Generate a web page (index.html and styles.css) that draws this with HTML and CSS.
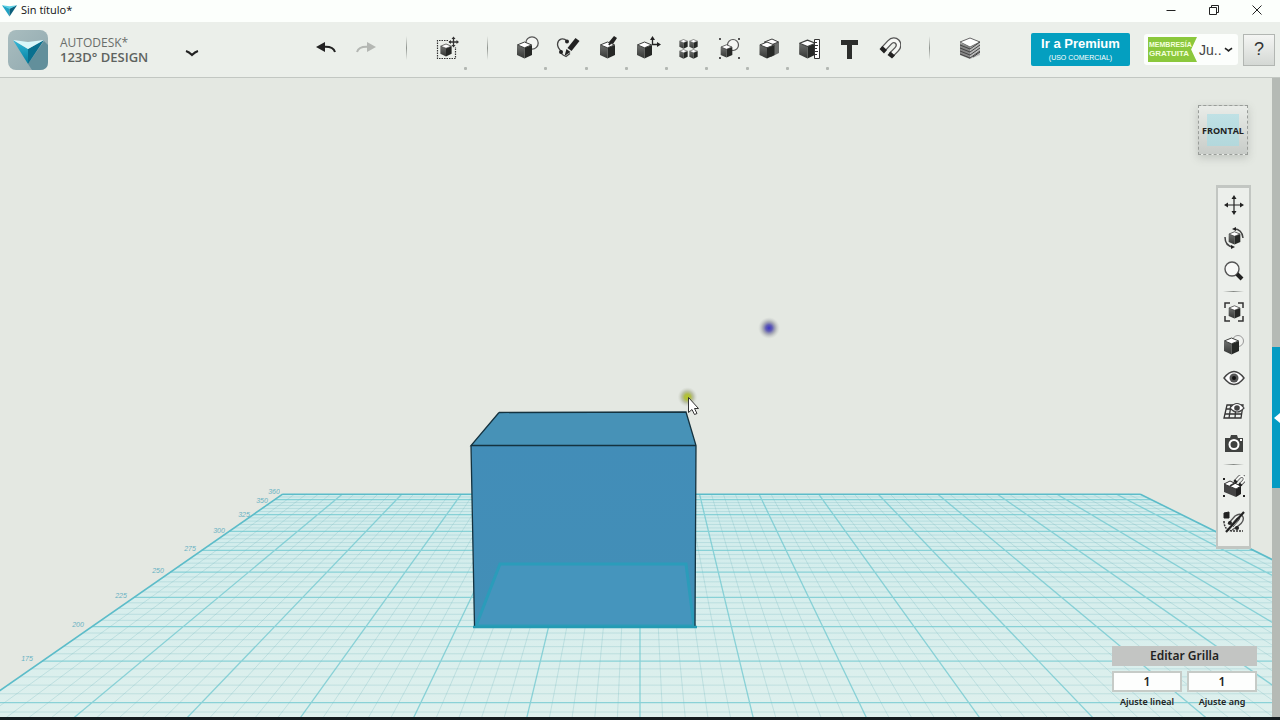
FILE: index.html
```html
<!DOCTYPE html>
<html lang="es">
<head>
<meta charset="utf-8">
<title>Sin título* - Autodesk 123D Design</title>
<link rel="stylesheet" href="styles.css">
</head>
<body>
<svg class="defs" aria-hidden="true">
  <defs>
    <linearGradient id="cube-side" x1="0" y1="0" x2="0" y2="1"><stop offset="0" stop-color="#6e706e"/><stop offset="1" stop-color="#343634"/></linearGradient>
    <symbol id="cube" viewBox="0 0 16 18">
      <path d="M.5 4L8 6.500v11L.5 14z" fill="url(#cube-side)"/>
      <path d="M8 6.500L15.500 4v10L8 17.500z" fill="#262826"/>
      <path d="M.9 3.900L8 1l7.100 2.900L8 6.800z" fill="#fff" stroke="#3c3e3c" stroke-width="1" stroke-linejoin="round"/>
    </symbol>
    <symbol id="magnet" viewBox="0 0 22 22">
      <path d="M4 12.500L10.500 5.500C16-.5 23 7 17.500 12.500L12 18" fill="none" stroke="#555" stroke-width="6"/>
      <path d="M4 12.500L10.500 5.500C16-.5 23 7 17.500 12.500L12 18" fill="none" stroke="#f6f8f5" stroke-width="3.400"/>
      <path d="M.5 12L3.500 9l4.500 4-3 3.500zM8.500 18l3-3.500 4.500 4-3 3z" fill="#222"/>
    </symbol>
  </defs>
</svg>
<div class="app">
  <header class="titlebar">
    <svg class="title-mark" viewBox="0 0 16 13"><path d="M0 1l8 3v9z" fill="#1fa3c4"/><path d="M16 1L8 4v9z" fill="#0b5f7a"/><path d="M0 1l8 1 8-1-8 4z" fill="#5bd0e4"/></svg>
    <span class="title-text">Sin título*</span>
    <div class="window-controls">
      <button aria-label="Minimizar"><svg viewBox="0 0 12 12"><path d="M1.500 6.500h9"/></svg></button>
      <button aria-label="Restaurar"><svg viewBox="0 0 12 12"><path d="M1.500 3.500h7v7h-7zM3.500 3.500v-2h7v7h-2"/></svg></button>
      <button aria-label="Cerrar"><svg viewBox="0 0 12 12"><path d="M1.500 1.500l9 9M10.500 1.500l-9 9"/></svg></button>
    </div>
  </header>

  <div class="toolbar">
    <div class="brand">
      <svg class="logo" viewBox="0 0 40 40">
        <defs><linearGradient id="tile" x2="1" y2="1"><stop offset="0" stop-color="#a9bdbf"/><stop offset="1" stop-color="#91a9af"/></linearGradient>
        <linearGradient id="fold" x2="0" y2="1"><stop offset="0" stop-color="#35b9da"/><stop offset="1" stop-color="#047e9e"/></linearGradient></defs>
        <rect width="40" height="40" rx="8" fill="url(#tile)"/>
        <path d="M36 11l4 4v17q0 8-8 8h-8l-4-6z" fill="#628f9b"/>
        <path d="M5 10l15 9v15z" fill="url(#fold)"/><path d="M36 10l-16 9v15z" fill="#08708f"/><path d="M5 10l15 2 16-2-16 9z" fill="#d9f7fa"/>
      </svg>
      <div class="brand-name"><span class="brand-top">AUTODESK*</span><span class="brand-main">123D° DESIGN</span></div>
      <button class="menu-button" aria-label="Menú"><svg viewBox="0 0 14 8"><path d="M1 2q3 1 6 4 3-3 6-4" fill="none" stroke="#222" stroke-width="2"/></svg></button>
    </div>

    <nav class="tools" aria-label="Herramientas">
      <button class="tool" aria-label="Deshacer"><svg viewBox="0 0 26 26"><path d="M3 12l9-5v10z" fill="#222"/><path d="M10 12q10-1 12 5" fill="none" stroke="#222" stroke-width="2"/></svg></button>
      <button class="tool" aria-label="Rehacer"><svg viewBox="0 0 26 26"><path d="M23 12l-9-5v10z" fill="#b4b7b3"/><path d="M16 12q-10-1-12 5" fill="none" stroke="#b4b7b3" stroke-width="2"/></svg></button>
      <span class="divider"></span>
      <button class="tool more" aria-label="Transformar"><svg viewBox="0 0 26 26"><path d="M14 5.500H3.500v18h18V12" fill="none" stroke="#333" stroke-width="1.200" stroke-dasharray="1.500 1"/><use href="#cube" x="6" y="8" width="12" height="14"/><path d="M19.500 3v8M15 7h9" stroke="#333" stroke-width="1.300"/><path d="M19.500 1.500l2 2.500h-4zM19.500 12.500l2-2.500h-4zM14.500 7l2.500-2v4zM25 7l-2.500-2v4z" fill="#333"/></svg></button>
      <span class="divider"></span>
      <button class="tool more" aria-label="Primitivas"><svg viewBox="0 0 26 26"><circle cx="18" cy="8" r="6.200" fill="#f4f6f3" stroke="#555" stroke-width="1.300"/><use href="#cube" x="2" y="6" width="17" height="18"/></svg></button>
      <button class="tool more" aria-label="Boceto"><svg viewBox="0 0 26 26"><path d="M12 6C8 2 3 4 2.500 9q0 4 4 7.500-1 3 4.500 5l4-3" fill="none" stroke="#444" stroke-width="1.300"/><path d="M20.500 3l4 3-8 10-4-3z" fill="#222"/><path d="M11.500 14l4 3-6 4z" fill="#222"/><circle cx="12" cy="6.500" r="2" fill="#222"/><circle cx="6" cy="17" r="2" fill="#222"/></svg></button>
      <button class="tool more" aria-label="Construir"><svg viewBox="0 0 26 26"><use href="#cube" x="4" y="6" width="17" height="18"/><path d="M19 1l3 2-4 6-4-2z" fill="#222"/><path d="M16 7l-2 3" stroke="#222" stroke-width="2"/></svg></button>
      <button class="tool more" aria-label="Modificar"><svg viewBox="0 0 26 26"><use href="#cube" x="1" y="6" width="17" height="18"/><path d="M17.500 10V3M17 9.500h6" stroke="#222" stroke-width="1.300"/><path d="M17.500 1l2.500 4h-5zM26 9.500L22 7v5z" fill="#222"/></svg></button>
      <button class="tool more" aria-label="Patrón"><svg viewBox="0 0 26 26"><use href="#cube" x="4" y="4" width="9" height="10"/><use href="#cube" x="14" y="4" width="9" height="10"/><use href="#cube" x="4" y="14" width="9" height="10"/><use href="#cube" x="14" y="14" width="9" height="10"/></svg></button>
      <button class="tool more" aria-label="Agrupar"><svg viewBox="0 0 26 26"><circle cx="18" cy="10" r="5.500" fill="#f4f6f3" stroke="#555" stroke-width="1.200"/><use href="#cube" x="5" y="9" width="13" height="14"/><path d="M4 3h2v2H4zM23 3h2v2h-2zM4 22h2v2H4zM23 22h2v2h-2z" fill="#555"/></svg></button>
      <button class="tool more" aria-label="Combinar"><svg viewBox="0 0 26 26"><path d="M8 7l8-3 7 3v11l-8 4-7-4z" fill="#6c6e6c"/><path d="M8.500 7L16 4l6.500 3L15 10z" fill="#fff" stroke="#444"/><use href="#cube" x="3" y="6" width="16" height="18"/></svg></button>
      <button class="tool more" aria-label="Medir"><svg viewBox="0 0 26 26"><use href="#cube" x="2" y="4" width="19" height="20"/><path d="M18.500 4.500h5v19h-5z" fill="#fff" stroke="#333"/><path d="M19 7.500h2M19 10.500h3M19 13.500h2M19 16.500h3M19 19.500h2" stroke="#333"/></svg></button>
      <button class="tool" aria-label="Texto"><svg viewBox="0 0 26 26"><path d="M5 5h17v5h-6v14h-5V10H5z" fill="#2c2e2c"/></svg></button>
      <button class="tool" aria-label="Ajustar"><svg viewBox="0 0 26 26"><use href="#magnet" x="3" y="2" width="22" height="22"/></svg></button>
      <span class="divider"></span>
      <button class="tool" aria-label="Material"><svg viewBox="0 0 26 26"><path d="M3 8l10 4v12L3 20z" fill="#888"/><path d="M13 12l10-4v12l-10 4z" fill="#bbb"/><path d="M3 7l10-4 10 4-10 5z" fill="#fff" stroke="#666"/><path d="M3 10l10 4 10-7M3 13l10 4 10-7M3 16l10 4 10-7M3 19l10 4 10-7M16 22l7-5" fill="none" stroke="#444"/></svg></button>
    </nav>

    <div class="account-area">
      <button class="premium"><strong>Ir a Premium</strong><small>(USO COMERCIAL)</small></button>
      <button class="account"><span class="badge"><span class="badge-top">MEMBRESÍA</span><span class="badge-main">GRATUITA</span></span><span class="user">Ju..</span><svg viewBox="0 0 10 6"><path d="M1 1q2 1 4 3 2-2 4-3" fill="none" stroke="#222" stroke-width="1.800"/></svg></button>
      <button class="help">?</button>
    </div>
  </div>

  <main class="workspace">
    <div class="viewport">
      <svg class="scene" viewBox="0 78 1272 639" preserveAspectRatio="xMidYMid slice">
        <defs>
          <linearGradient id="floor" x2="0" y2="1"><stop offset="0" stop-color="#d0ecec"/><stop offset="1" stop-color="#def0ed"/></linearGradient>
          <radialGradient id="blue-glow"><stop offset="0" stop-color="#3c34c4"/><stop offset=".3" stop-color="#6360b4"/><stop offset=".6" stop-color="#999ba8" stop-opacity=".7"/><stop offset="1" stop-color="#c8ccc8" stop-opacity="0"/></radialGradient>
          <radialGradient id="lime-glow"><stop offset="0" stop-color="#b4c820"/><stop offset=".3" stop-color="#b0bd48"/><stop offset=".6" stop-color="#a5ab88" stop-opacity=".6"/><stop offset="1" stop-color="#c8ccc8" stop-opacity="0"/></radialGradient>
          <linearGradient id="front" x2="0" y2="1"><stop offset="0" stop-color="#428db8"/><stop offset="1" stop-color="#428fb7"/></linearGradient>
        </defs>
        <polygon id="floor-plane" fill="url(#floor)"/>
        <path id="minor-lines" class="minor"/>
        <path id="major-lines" class="major"/>
        <path id="edge-lines" class="edge"/>
        <g class="ruler">
          <text x="27" y="661">175</text><text x="78" y="627">200</text><text x="121" y="598">225</text><text x="158" y="573">250</text><text x="190" y="551">275</text><text x="219" y="533">300</text><text x="244" y="517">325</text><text x="262" y="503">350</text><text x="274" y="494">360</text>
        </g>
        <path d="M499 412.500L686 412l10 33.500H471z" fill="#4792b7"/>
        <path d="M471 445.500h225L695 627H474.500z" fill="url(#front)"/>
        <path d="M500 564h186l8 62H476z" fill="#4595bd" stroke="#2b9cba" stroke-width="3"/>
        <path d="M499 412.500L686 412l10 33.500L695 626M499 412.500l-28 33h225M471 445.500L474.500 626" fill="none" stroke="#14323f" stroke-width="1.300"/>
        <path d="M473 627h224" stroke="#249bb3" stroke-width="2.500"/>
        <circle cx="769" cy="328" r="11" fill="url(#blue-glow)"/>
        <circle cx="687.500" cy="397" r="10" fill="url(#lime-glow)"/>
        <path d="M688.500 397.500v15l3.500-3 2.500 5 2.500-1-2.500-5h4z" fill="#fff" stroke="#333"/>
      </svg>

      <button class="view-cube">FRONTAL</button>

      <nav class="side-tools" aria-label="Navegación">
        <button aria-label="Encuadre"><svg viewBox="0 0 22 22"><path d="M11 3v16M3 11h16" stroke="#222" stroke-width="1.200"/><path d="M11 1l2.500 4h-5zM11 21l2.500-4h-5zM1 11l4-2.500v5zM21 11l-4-2.500v5z" fill="#222"/></svg></button>
        <button aria-label="Órbita"><svg viewBox="0 0 22 22"><use href="#cube" x="5" y="4" width="13" height="14"/><path d="M11 2q8 0 9 9M2 10q0 9 8 10" fill="none" stroke="#444" stroke-width="1.500"/><path d="M9 2l4-2v4zM12 20l-4-2v4z" fill="#222"/></svg></button>
        <button aria-label="Zoom"><svg viewBox="0 0 22 22"><circle cx="9" cy="9" r="7" fill="#f8f9f7" stroke="#555" stroke-width="1.400"/><path d="M14 14l5 5" stroke="#222" stroke-width="4"/></svg></button>
        <span class="side-divider"></span>
        <button aria-label="Ajustar vista"><svg viewBox="0 0 22 22"><path d="M2 7V2h5M15 2h5v5M20 15v5h-5M7 20H2v-5" fill="none" stroke="#333" stroke-width="1.500"/><use href="#cube" x="5" y="4" width="13" height="14"/></svg></button>
        <button aria-label="Materiales"><svg viewBox="0 0 22 22"><circle cx="15" cy="7" r="5.500" fill="#f0f2ef" stroke="#999"/><use href="#cube" x="0" y="3" width="17" height="18"/></svg></button>
        <button aria-label="Mostrar"><svg viewBox="0 0 22 22"><path d="M1 11q10-13 20 0-10 13-20 0z" fill="#fff" stroke="#444" stroke-width="1.400"/><circle cx="11" cy="11" r="4.500" fill="#555"/><circle cx="11" cy="11" r="2" fill="#111"/></svg></button>
        <button aria-label="Mostrar grilla"><svg viewBox="0 0 22 22"><path d="M4 5h16l-2 13H1zM3 9h16M2 14h16M8 5L6 18M13 5l-1 13" fill="none" stroke="#333" stroke-width="1.300"/><path d="M7 8q7-9 14 0-7 8-14 0z" fill="#fff" stroke="#444" stroke-width="1.200"/><circle cx="14" cy="8" r="2.800" fill="#444"/></svg></button>
        <button aria-label="Captura"><svg viewBox="0 0 22 22"><path d="M2 5h5l1-3h6l1 3h5v14H2z" fill="#404240"/><circle cx="11" cy="11.500" r="4.500" fill="#404240" stroke="#fff" stroke-width="2"/><path d="M17 6h2v2h-2z" fill="#fff"/></svg></button>
        <span class="side-divider"></span>
        <button class="tall" aria-label="Ajuste de grupo"><svg viewBox="0 0 22 22"><path d="M1 9l12 5v8L1 17z" fill="#444"/><path d="M13 14l5-3v8l-5 3z" fill="#222"/><path d="M1 9l6-3 11 5-5 3z" fill="#fff" stroke="#333"/><path d="M7 11l5-3" stroke="#333" stroke-width="1.500"/><use href="#magnet" x="10" y="-1" width="13" height="13"/><path d="M0 3h2v2H0zM0 20h2v2H0zM20 20h2v2h-2z" fill="#222"/></svg></button>
        <button class="tall" aria-label="Ocultar bocetos"><svg viewBox="0 0 22 22"><path d="M1 2l5-1v6H1z" fill="#222" stroke="#222"/><path d="M1 10q0 9 8 10h11" fill="none" stroke="#333" stroke-width="1.500" stroke-dasharray="2 1"/><path d="M5 13L12 5q6-4 8 1t-8 11l-3 2" fill="none" stroke="#555" stroke-width="1.400"/><path d="M8 14l6-7q4-1 2 2l-6 7" fill="none" stroke="#555"/><path d="M21 1L3 21" stroke="#222" stroke-width="2.200"/><circle cx="7" cy="12" r="2" fill="#222"/><circle cx="14" cy="17" r="2" fill="#222"/></svg></button>
      </nav>

      <section class="grid-panel">
        <button class="edit-grid">Editar Grilla</button>
        <div class="snap-fields">
          <div class="snap"><input id="linear" type="text" value="1"><label for="linear">Ajuste lineal</label></div>
          <div class="snap"><input id="angular" type="text" value="1"><label for="angular">Ajuste ang</label></div>
        </div>
      </section>
    </div>
    <aside class="drawer"><button class="drawer-tab" aria-label="Abrir panel"><svg viewBox="0 0 6 10"><path d="M6 0v10L0 5z" fill="#fff"/></svg></button></aside>
  </main>
  <footer class="bottom-edge"></footer>
</div>
<script src="grid.js"></script>
</body>
</html>
```

FILE: styles.css
```css
* { box-sizing: border-box; }
body { margin: 0; font-family: "Open Sans", "Noto Sans", sans-serif; color: #222; }
button { padding: 0; border: 0; background: none; color: inherit; font: inherit; }
.defs { position: absolute; width: 0; height: 0; }
.app { display: flex; flex-direction: column; min-height: 100vh; background: #e4e8e2; }

.titlebar { display: flex; align-items: center; gap: 4px; height: 22px; padding: 0 6px 2px 2px; background: #fcfffc; }
.title-mark { width: 15px; height: 13px; }
.title-text { font-size: 11px; line-height: 20px; color: #111; }
.window-controls { display: flex; gap: 8px; margin-left: auto; }
.window-controls button { display: flex; align-items: center; justify-content: center; width: 35px; height: 20px; }
.window-controls svg { width: 12px; height: 12px; fill: none; stroke: #222; stroke-width: 1; }

.toolbar { display: flex; align-items: center; height: 56px; background: #ebefea; border-bottom: 1px solid #c2c7c2; }
.brand { display: flex; align-items: center; gap: 12px; flex: none; width: 306px; padding-left: 8px; }
.logo { width: 40px; height: 40px; }
.brand-name { display: flex; flex-direction: column; width: 113px; line-height: 15px; color: #6a6e6b; }
.brand-top { font-size: 12px; }
.brand-main { font-size: 13px; font-weight: 600; color: #5e6360; }
.menu-button { display: flex; align-items: center; height: 24px; padding-top: 7px; }
.menu-button svg { width: 14px; height: 8px; }

.tools { display: flex; flex: 1; align-items: center; height: 55px; }
.tool { position: relative; display: flex; flex: 1; align-items: center; justify-content: center; height: 55px; padding-bottom: 3px; }
.tool svg { width: 26px; height: 26px; }
.more::after { content: ""; position: absolute; right: 0; bottom: 7px; width: 3px; height: 3px; border-radius: 1px; background: #b3b8b3; }
.divider { display: flex; flex: 1; justify-content: center; height: 24px; margin-bottom: 3px; }
.divider::before { content: ""; width: 1px; background: linear-gradient(transparent, #8f948f, transparent); }

.account-area { display: flex; flex: none; align-items: center; width: 290px; padding-left: 41px; font-family: "Liberation Sans", Arial, sans-serif; }
.premium { display: flex; flex-direction: column; align-items: center; justify-content: center; gap: 2px; width: 99px; height: 33px; border-radius: 2px; background: #049fc0; color: #fff; }
.premium strong { font-size: 13px; line-height: 15px; }
.premium small { font-size: 7px; line-height: 10px; }
.account { display: flex; align-items: center; gap: 2px; width: 94px; height: 31px; margin-left: 14px; padding-left: 4px; border-radius: 3px; background: #fcfefc; }
.badge { display: flex; flex-direction: column; justify-content: center; width: 49px; height: 25px; padding-left: 1px; background: #8bc83c; clip-path: polygon(0 0, 100% 0, 88% 50%, 100% 100%, 0 100%); color: #f3ffdc; font-weight: bold; text-align: left; }
.badge-top { font-size: 7px; line-height: 9px; }
.badge-main { font-size: 8px; line-height: 10px; }
.user { width: 21px; font-size: 14px; color: #444; }
.account svg { width: 9px; height: 6px; margin-left: 2px; }
.help { width: 32px; height: 32px; margin-left: 5px; border: 1px solid #b2b6b2; background: linear-gradient(#f4f5f3, #d4d8d4); color: #333; font-size: 18px; }

.workspace { display: flex; flex: 1; min-height: 639px; }
.viewport { position: relative; flex: 1; overflow: hidden; }
.scene { position: absolute; inset: 0; width: 100%; height: 100%; }
.minor { fill: none; stroke: #72b8bd; stroke-opacity: .28; }
.major { fill: none; stroke: #66c5cd; stroke-opacity: .7; stroke-width: 1.300; }
.edge { fill: none; stroke: #5cbcc9; stroke-width: 1.600; }
.ruler { fill: #48a6bb; font: italic 7px "Liberation Sans", sans-serif; text-anchor: middle; opacity: .8; }

.view-cube { position: absolute; top: 27px; right: 24px; width: 50px; height: 50px; border: 1px dashed #999d99; background: linear-gradient(#bfe1e5, #b3d8dc) center / 32px 32px no-repeat, linear-gradient(#e9ece8, #c8ccc8); box-shadow: 0 3px 8px rgba(90, 95, 90, .25); font-size: 9px; font-weight: 700; }

.side-tools { position: absolute; top: 107px; right: 21px; display: flex; flex-direction: column; width: 35px; padding-bottom: 6px; border: 3px solid #c2c6c2; border-width: 3px 2px; background: #ecefeb; }
.side-tools button { display: flex; align-items: center; justify-content: center; height: 33px; }
.side-tools .tall { height: 36px; }
.side-tools svg { width: 22px; height: 22px; }
.side-divider { display: flex; align-items: center; height: 8px; padding: 0 5px; }
.side-divider::before { content: ""; flex: 1; height: 1px; background: linear-gradient(90deg, transparent, #858985, transparent); }

.grid-panel { position: absolute; right: 15px; bottom: 9px; display: flex; flex-direction: column; gap: 5px; width: 145px; font-family: "Noto Sans", "Open Sans", sans-serif; }
.edit-grid { height: 20px; background: #c3c5c3; font-size: 12px; font-weight: 600; line-height: 20px; }
.snap-fields { display: flex; gap: 5px; }
.snap { display: flex; flex: 1; flex-direction: column; align-items: center; gap: 3px; min-width: 0; }
.snap input { width: 100%; height: 21px; padding: 0; border: 2px solid #c6cbc7; background: #fdfefd; color: #222; font: 600 12px "Noto Sans", sans-serif; text-align: center; }
.snap label { font-size: 9px; font-weight: 600; line-height: 13px; }

.drawer { display: flex; flex: none; flex-direction: column; width: 8px; padding-top: 269px; background: #b5bab5; }
.drawer-tab { display: flex; align-items: center; justify-content: flex-end; height: 141px; background: #049bc3; }
.drawer-tab svg { width: 6px; height: 10px; }
.bottom-edge { height: 3px; background: #141c1f; }
```

FILE: grid.js
```javascript
// Ground plane in one-point perspective: rows recede towards the horizon,
// columns meet at the vanishing point.
const horizon = 246, vanishX = 640, depth = 4567, nearDistance = 10;
const farRow = 8.4, leftColumn = -6, rightColumn = 8.4, columnSlope = 0.24;
const nearY = 720, subdivisions = 5;

const rowY = n => horizon + depth / (nearDistance + n);
const columnX = (c, y) => vanishX + c * columnSlope * (y - horizon);
const farY = rowY(farRow);
const segment = (x1, y1, x2, y2) =>
  `M${x1.toFixed(2)} ${y1.toFixed(2)}L${x2.toFixed(2)} ${y2.toFixed(2)}`;
const row = y => segment(columnX(leftColumn, y), y, columnX(rightColumn, y), y);
const column = c => segment(columnX(c, farY), farY, columnX(c, nearY), nearY);

let minorLines = "", majorLines = "";
for (let i = -2; i / subdivisions < farRow; i++) {
  const line = row(rowY(i / subdivisions));
  if (i % subdivisions === 0) majorLines += line; else minorLines += line;
}
for (let i = leftColumn * subdivisions + 1; i / subdivisions < rightColumn; i++) {
  const line = column(i / subdivisions);
  if (i % subdivisions === 0) majorLines += line; else minorLines += line;
}
document.getElementById("minor-lines").setAttribute("d", minorLines);
document.getElementById("major-lines").setAttribute("d", majorLines);
document.getElementById("edge-lines").setAttribute("d", row(farY) + column(leftColumn) + column(rightColumn));
document.getElementById("floor-plane").setAttribute("points",
  [[leftColumn, farY], [rightColumn, farY], [rightColumn, nearY], [leftColumn, nearY]]
    .map(([c, y]) => `${columnX(c, y)},${y}`).join(" "));
```
